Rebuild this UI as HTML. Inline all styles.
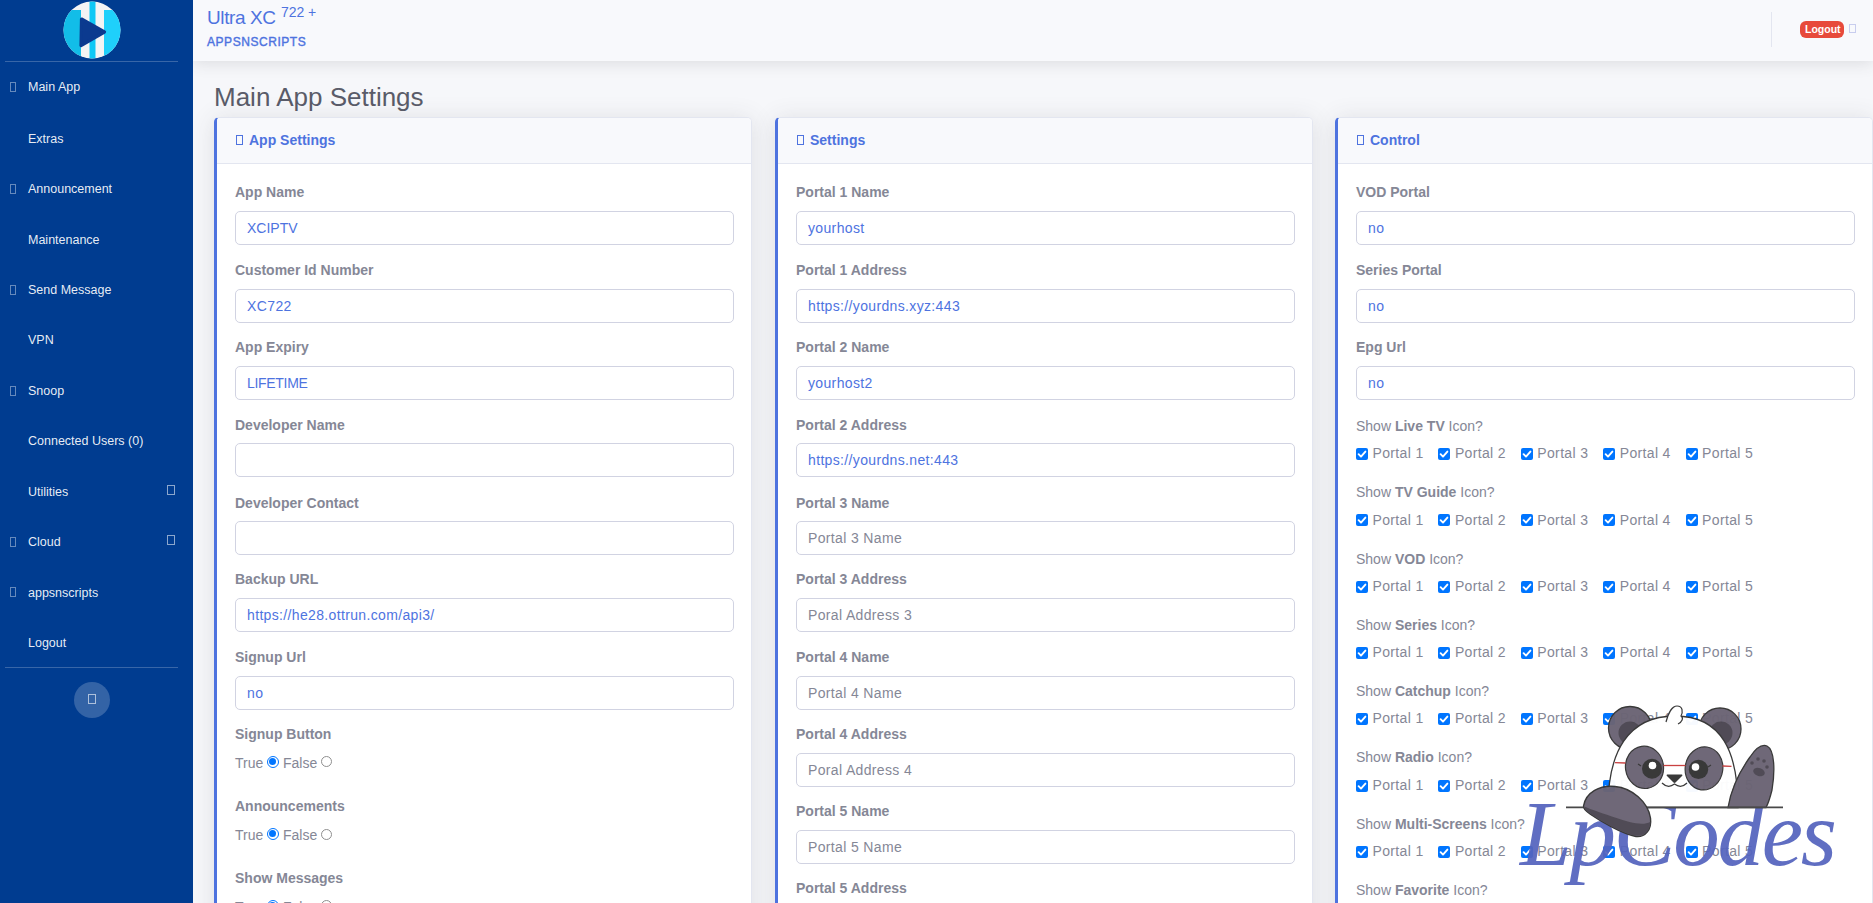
<!DOCTYPE html><html><head><meta charset="utf-8"><title>Main App Settings</title><style>
*{box-sizing:border-box;margin:0;padding:0}
html,body{width:1873px;height:903px;overflow:hidden}
body{font-family:"Liberation Sans",sans-serif;background:#f6f7fa;position:relative;color:#858796}
.t{position:absolute;white-space:nowrap;line-height:1}
#sb{position:absolute;left:0;top:0;width:193px;height:903px;background:#003c90;z-index:3}
.hr{position:absolute;left:5px;width:173px;height:1px;background:rgba(255,255,255,.22)}
.si{position:absolute;left:28px;font-size:12.5px;color:rgba(255,255,255,.92);white-space:nowrap;line-height:1}
.ic{position:absolute;left:10px;width:6px;height:10px;border:1px solid rgba(255,255,255,.4)}
.ar{position:absolute;left:167px;width:8px;height:10px;border:1px solid rgba(255,255,255,.55)}
#top{position:absolute;left:193px;top:0;width:1680px;height:61px;background:#f8f9fc;box-shadow:0 3px 14px rgba(58,59,69,.13);z-index:2}
.card{position:absolute;top:117px;height:820px;background:#fff;border-radius:5px;border:1px solid #e3e6f0;border-left:3px solid #4e73df;box-shadow:0 2px 24px rgba(58,59,69,.13);overflow:hidden}
.card .bl{position:absolute;left:0;top:0;bottom:0;width:3px;background:#4e73df;border-radius:5px 0 0 5px}
.card .hd{position:absolute;left:0;top:0;right:0;height:46px;background:#f8f9fc;border-bottom:1px solid #e3e6f0}
.ch{position:absolute;font-size:14px;font-weight:bold;color:#4e73df;white-space:nowrap;line-height:1}
.ch i{display:inline-block;width:7px;height:10px;border:1px solid #4e73df;margin-right:6px;vertical-align:0px}
.lbl{position:absolute;font-size:14px;font-weight:bold;color:#858796;white-space:nowrap;line-height:1}
.inp{position:absolute;height:34px;border:1px solid #d1d3e2;border-radius:5px;background:#fff}
.iv{position:absolute;font-size:14px;line-height:1;color:#4e73df;white-space:nowrap;letter-spacing:.35px}
.ph{color:#858796}
.rt{position:absolute;font-size:14px;line-height:1;color:#858796;white-space:nowrap}
.cb{position:absolute;width:12px;height:12px;background:#0075ff;border-radius:2px}
.cb svg{position:absolute;left:0;top:0}
.rad{position:absolute;width:12px;height:12px;border-radius:50%}
.ron{border:1.2px solid #0075ff;background:#fff}
.ron:after{content:"";position:absolute;left:1.3px;top:1.3px;width:7px;height:7px;border-radius:50%;background:#0075ff}
.roff{border:1px solid #8f8f8f;background:#fff;width:11.2px;height:11.2px}
</style></head><body>
<div id="sb">
<svg style="position:absolute;left:63px;top:0.5px" width="58" height="58" viewBox="0 0 58 58">
<defs><clipPath id="cc"><circle cx="29" cy="29" r="28.5"/></clipPath></defs>
<g clip-path="url(#cc)">
<rect x="0" y="0" width="58" height="58" fill="#f4f4f4"/>
<rect x="0" y="9" width="18" height="50" fill="#12bde8"/>
<rect x="26.5" y="0" width="6" height="58" fill="#0fc8f5"/>
<rect x="41" y="9" width="17" height="50" fill="#1fd0fb"/>
</g>
<path d="M18.5 18 L41.5 31 L18 44.5 Z" fill="#0b3a8f" stroke="#0b3a8f" stroke-width="3.2" stroke-linejoin="round"/>
</svg>
<div class="hr" style="top:61px"></div>
<div class="si" style="left:28px;top:81.22px;font-size:12.5px;">Main App</div>
<div class="ic" style="top:81.9px"></div>
<div class="si" style="left:28px;top:132.52px;font-size:12.5px;">Extras</div>
<div class="si" style="left:28px;top:183.02px;font-size:12.5px;">Announcement</div>
<div class="ic" style="top:183.7px"></div>
<div class="si" style="left:28px;top:233.82px;font-size:12.5px;">Maintenance</div>
<div class="si" style="left:28px;top:284.02px;font-size:12.5px;">Send Message</div>
<div class="ic" style="top:284.7px"></div>
<div class="si" style="left:28px;top:334.22px;font-size:12.5px;">VPN</div>
<div class="si" style="left:28px;top:385.02px;font-size:12.5px;">Snoop</div>
<div class="ic" style="top:385.7px"></div>
<div class="si" style="left:28px;top:435.32px;font-size:12.5px;">Connected Users (0)</div>
<div class="si" style="left:28px;top:486.02px;font-size:12.5px;">Utilities</div>
<div class="ar" style="top:485.0px"></div>
<div class="si" style="left:28px;top:536.02px;font-size:12.5px;">Cloud</div>
<div class="ic" style="top:536.7px"></div>
<div class="ar" style="top:535.0px"></div>
<div class="si" style="left:28px;top:586.52px;font-size:12.5px;">appsnscripts</div>
<div class="ic" style="top:587.2px"></div>
<div class="si" style="left:28px;top:637.02px;font-size:12.5px;">Logout</div>
<div class="hr" style="top:667px"></div>
<div style="position:absolute;left:74px;top:682px;width:36px;height:36px;border-radius:50%;background:rgba(255,255,255,.2)"><div style="position:absolute;left:14px;top:12px;width:8px;height:10px;border:1px solid rgba(255,255,255,.6)"></div></div>
</div>
<div id="top">
</div>
<div class="t" style="left:207px;top:7.82px;font-size:19px;color:#4e73df;z-index:4"><span style="letter-spacing:-.4px">Ultra XC</span> <sup style="font-size:14px;vertical-align:0;position:relative;top:-6.5px">722 +</sup></div>
<div class="t" style="left:207px;top:36.04px;font-size:12px;color:#4e73df;-webkit-text-stroke:.4px #4e73df;letter-spacing:.55px;z-index:4">APPSNSCRIPTS</div>
<div style="position:absolute;left:1771px;top:12px;width:1px;height:35px;background:#e3e6f0;z-index:4"></div>
<div style="position:absolute;left:1800px;top:21px;width:44px;height:17px;border-radius:6px;background:#e74a3b;z-index:4"></div>
<div class="t" style="left:1805px;top:24.41px;font-size:10.5px;color:#fff;font-weight:bold;z-index:5">Logout</div>
<div style="position:absolute;left:1849px;top:24px;width:7px;height:9px;border:1px solid #c8cdee;z-index:5"></div>
<div class="t" style="left:214px;top:83.79px;font-size:26px;color:#5a5c69">Main App Settings</div>
<div class="card" style="left:214px;width:538px"><div class="hd"></div></div>
<div class="ch" style="left:236px;top:132.65px;font-size:14px;"><i></i>App Settings</div>
<div class="card" style="left:775px;width:538px"><div class="hd"></div></div>
<div class="ch" style="left:797px;top:132.65px;font-size:14px;"><i></i>Settings</div>
<div class="card" style="left:1335px;width:538px"><div class="hd"></div></div>
<div class="ch" style="left:1357px;top:132.65px;font-size:14px;"><i></i>Control</div>
<div class="lbl" style="left:235px;top:185.35px;font-size:14px;">App Name</div>
<div class="inp" style="left:235px;top:211.0px;width:499px"></div>
<div class="iv" style="left:247px;top:221.15px;font-size:14px;letter-spacing:0px">XCIPTV</div>
<div class="lbl" style="left:235px;top:263.35px;font-size:14px;">Customer Id Number</div>
<div class="inp" style="left:235px;top:289.0px;width:499px"></div>
<div class="iv" style="left:247px;top:299.15px;font-size:14px;letter-spacing:0.4px">XC722</div>
<div class="lbl" style="left:235px;top:340.35px;font-size:14px;">App Expiry</div>
<div class="inp" style="left:235px;top:366.0px;width:499px"></div>
<div class="iv" style="left:247px;top:376.15px;font-size:14px;letter-spacing:-0.3px">LIFETIME</div>
<div class="lbl" style="left:235px;top:418.35px;font-size:14px;">Developer Name</div>
<div class="inp" style="left:235px;top:443.0px;width:499px"></div>
<div class="iv" style="left:247px;top:453.15px;font-size:14px;letter-spacing:0.35px"></div>
<div class="lbl" style="left:235px;top:495.95px;font-size:14px;">Developer Contact</div>
<div class="inp" style="left:235px;top:521.0px;width:499px"></div>
<div class="iv" style="left:247px;top:531.15px;font-size:14px;letter-spacing:0.35px"></div>
<div class="lbl" style="left:235px;top:572.35px;font-size:14px;">Backup URL</div>
<div class="inp" style="left:235px;top:598.0px;width:499px"></div>
<div class="iv" style="left:247px;top:608.15px;font-size:14px;letter-spacing:0.35px">https://he28.ottrun.com/api3/</div>
<div class="lbl" style="left:235px;top:650.35px;font-size:14px;">Signup Url</div>
<div class="inp" style="left:235px;top:676.0px;width:499px"></div>
<div class="iv" style="left:247px;top:686.15px;font-size:14px;letter-spacing:0.35px">no</div>
<div class="lbl" style="left:235px;top:726.75px;font-size:14px;">Signup Button</div>
<div class="rt" style="left:235px;top:755.95px;font-size:14px;">True</div>
<div class="rad ron" style="left:267px;top:755.8px"></div>
<div class="rt" style="left:283px;top:755.95px;font-size:14px;">False</div>
<div class="rad roff" style="left:321px;top:756.2px"></div>
<div class="lbl" style="left:235px;top:799.05px;font-size:14px;">Announcements</div>
<div class="rt" style="left:235px;top:828.25px;font-size:14px;">True</div>
<div class="rad ron" style="left:267px;top:828.1px"></div>
<div class="rt" style="left:283px;top:828.25px;font-size:14px;">False</div>
<div class="rad roff" style="left:321px;top:828.5px"></div>
<div class="lbl" style="left:235px;top:870.95px;font-size:14px;">Show Messages</div>
<div class="rt" style="left:235px;top:900.15px;font-size:14px;">True</div>
<div class="rad ron" style="left:267px;top:900.0px"></div>
<div class="rt" style="left:283px;top:900.15px;font-size:14px;">False</div>
<div class="rad roff" style="left:321px;top:900.4px"></div>
<div class="lbl" style="left:796px;top:185.35px;font-size:14px;">Portal 1 Name</div>
<div class="inp" style="left:796px;top:211.0px;width:499px"></div>
<div class="iv" style="left:808px;top:221.15px;font-size:14px;letter-spacing:0.35px">yourhost</div>
<div class="lbl" style="left:796px;top:263.35px;font-size:14px;">Portal 1 Address</div>
<div class="inp" style="left:796px;top:289.0px;width:499px"></div>
<div class="iv" style="left:808px;top:299.15px;font-size:14px;letter-spacing:0.35px">https://yourdns.xyz:443</div>
<div class="lbl" style="left:796px;top:340.35px;font-size:14px;">Portal 2 Name</div>
<div class="inp" style="left:796px;top:366.0px;width:499px"></div>
<div class="iv" style="left:808px;top:376.15px;font-size:14px;letter-spacing:0.35px">yourhost2</div>
<div class="lbl" style="left:796px;top:418.35px;font-size:14px;">Portal 2 Address</div>
<div class="inp" style="left:796px;top:443.0px;width:499px"></div>
<div class="iv" style="left:808px;top:453.15px;font-size:14px;letter-spacing:0.35px">https://yourdns.net:443</div>
<div class="lbl" style="left:796px;top:495.95px;font-size:14px;">Portal 3 Name</div>
<div class="inp" style="left:796px;top:521.0px;width:499px"></div>
<div class="iv ph" style="left:808px;top:531.15px;font-size:14px;letter-spacing:0.35px">Portal 3 Name</div>
<div class="lbl" style="left:796px;top:572.35px;font-size:14px;">Portal 3 Address</div>
<div class="inp" style="left:796px;top:598.0px;width:499px"></div>
<div class="iv ph" style="left:808px;top:608.15px;font-size:14px;letter-spacing:0.35px">Poral Address 3</div>
<div class="lbl" style="left:796px;top:650.35px;font-size:14px;">Portal 4 Name</div>
<div class="inp" style="left:796px;top:676.0px;width:499px"></div>
<div class="iv ph" style="left:808px;top:686.15px;font-size:14px;letter-spacing:0.35px">Portal 4 Name</div>
<div class="lbl" style="left:796px;top:727.35px;font-size:14px;">Portal 4 Address</div>
<div class="inp" style="left:796px;top:753.0px;width:499px"></div>
<div class="iv ph" style="left:808px;top:763.15px;font-size:14px;letter-spacing:0.35px">Poral Address 4</div>
<div class="lbl" style="left:796px;top:804.35px;font-size:14px;">Portal 5 Name</div>
<div class="inp" style="left:796px;top:830.0px;width:499px"></div>
<div class="iv ph" style="left:808px;top:840.15px;font-size:14px;letter-spacing:0.35px">Portal 5 Name</div>
<div class="lbl" style="left:796px;top:881.35px;font-size:14px;">Portal 5 Address</div>
<div class="inp" style="left:796px;top:907.0px;width:499px"></div>
<div class="iv" style="left:808px;top:917.15px;font-size:14px;letter-spacing:0.35px"></div>
<div class="lbl" style="left:1356px;top:185.35px;font-size:14px;">VOD Portal</div>
<div class="inp" style="left:1356px;top:211.0px;width:499px"></div>
<div class="iv" style="left:1368px;top:221.15px;font-size:14px;letter-spacing:0.35px">no</div>
<div class="lbl" style="left:1356px;top:263.35px;font-size:14px;">Series Portal</div>
<div class="inp" style="left:1356px;top:289.0px;width:499px"></div>
<div class="iv" style="left:1368px;top:299.15px;font-size:14px;letter-spacing:0.35px">no</div>
<div class="lbl" style="left:1356px;top:340.35px;font-size:14px;">Epg Url</div>
<div class="inp" style="left:1356px;top:366.0px;width:499px"></div>
<div class="iv" style="left:1368px;top:376.15px;font-size:14px;letter-spacing:0.35px">no</div>
<div class="rt" style="left:1356px;top:418.95px;font-size:14px;">Show <b>Live TV</b> Icon?</div>
<div class="cb" style="left:1356.0px;top:448.1px"><svg width="12" height="12" viewBox="0 0 12 12"><path d="M2.6 6.2 L5 8.6 L9.4 3.6" fill="none" stroke="#fff" stroke-width="1.9" stroke-linecap="round" stroke-linejoin="round"/></svg></div>
<div class="rt" style="left:1372.5px;top:446.25px;font-size:14px;letter-spacing:.35px">Portal 1</div>
<div class="cb" style="left:1438.4px;top:448.1px"><svg width="12" height="12" viewBox="0 0 12 12"><path d="M2.6 6.2 L5 8.6 L9.4 3.6" fill="none" stroke="#fff" stroke-width="1.9" stroke-linecap="round" stroke-linejoin="round"/></svg></div>
<div class="rt" style="left:1454.9px;top:446.25px;font-size:14px;letter-spacing:.35px">Portal 2</div>
<div class="cb" style="left:1520.8px;top:448.1px"><svg width="12" height="12" viewBox="0 0 12 12"><path d="M2.6 6.2 L5 8.6 L9.4 3.6" fill="none" stroke="#fff" stroke-width="1.9" stroke-linecap="round" stroke-linejoin="round"/></svg></div>
<div class="rt" style="left:1537.3px;top:446.25px;font-size:14px;letter-spacing:.35px">Portal 3</div>
<div class="cb" style="left:1603.2px;top:448.1px"><svg width="12" height="12" viewBox="0 0 12 12"><path d="M2.6 6.2 L5 8.6 L9.4 3.6" fill="none" stroke="#fff" stroke-width="1.9" stroke-linecap="round" stroke-linejoin="round"/></svg></div>
<div class="rt" style="left:1619.7px;top:446.25px;font-size:14px;letter-spacing:.35px">Portal 4</div>
<div class="cb" style="left:1685.6px;top:448.1px"><svg width="12" height="12" viewBox="0 0 12 12"><path d="M2.6 6.2 L5 8.6 L9.4 3.6" fill="none" stroke="#fff" stroke-width="1.9" stroke-linecap="round" stroke-linejoin="round"/></svg></div>
<div class="rt" style="left:1702.1px;top:446.25px;font-size:14px;letter-spacing:.35px">Portal 5</div>
<div class="rt" style="left:1356px;top:485.25px;font-size:14px;">Show <b>TV Guide</b> Icon?</div>
<div class="cb" style="left:1356.0px;top:514.4px"><svg width="12" height="12" viewBox="0 0 12 12"><path d="M2.6 6.2 L5 8.6 L9.4 3.6" fill="none" stroke="#fff" stroke-width="1.9" stroke-linecap="round" stroke-linejoin="round"/></svg></div>
<div class="rt" style="left:1372.5px;top:512.55px;font-size:14px;letter-spacing:.35px">Portal 1</div>
<div class="cb" style="left:1438.4px;top:514.4px"><svg width="12" height="12" viewBox="0 0 12 12"><path d="M2.6 6.2 L5 8.6 L9.4 3.6" fill="none" stroke="#fff" stroke-width="1.9" stroke-linecap="round" stroke-linejoin="round"/></svg></div>
<div class="rt" style="left:1454.9px;top:512.55px;font-size:14px;letter-spacing:.35px">Portal 2</div>
<div class="cb" style="left:1520.8px;top:514.4px"><svg width="12" height="12" viewBox="0 0 12 12"><path d="M2.6 6.2 L5 8.6 L9.4 3.6" fill="none" stroke="#fff" stroke-width="1.9" stroke-linecap="round" stroke-linejoin="round"/></svg></div>
<div class="rt" style="left:1537.3px;top:512.55px;font-size:14px;letter-spacing:.35px">Portal 3</div>
<div class="cb" style="left:1603.2px;top:514.4px"><svg width="12" height="12" viewBox="0 0 12 12"><path d="M2.6 6.2 L5 8.6 L9.4 3.6" fill="none" stroke="#fff" stroke-width="1.9" stroke-linecap="round" stroke-linejoin="round"/></svg></div>
<div class="rt" style="left:1619.7px;top:512.55px;font-size:14px;letter-spacing:.35px">Portal 4</div>
<div class="cb" style="left:1685.6px;top:514.4px"><svg width="12" height="12" viewBox="0 0 12 12"><path d="M2.6 6.2 L5 8.6 L9.4 3.6" fill="none" stroke="#fff" stroke-width="1.9" stroke-linecap="round" stroke-linejoin="round"/></svg></div>
<div class="rt" style="left:1702.1px;top:512.55px;font-size:14px;letter-spacing:.35px">Portal 5</div>
<div class="rt" style="left:1356px;top:551.55px;font-size:14px;">Show <b>VOD</b> Icon?</div>
<div class="cb" style="left:1356.0px;top:580.7px"><svg width="12" height="12" viewBox="0 0 12 12"><path d="M2.6 6.2 L5 8.6 L9.4 3.6" fill="none" stroke="#fff" stroke-width="1.9" stroke-linecap="round" stroke-linejoin="round"/></svg></div>
<div class="rt" style="left:1372.5px;top:578.85px;font-size:14px;letter-spacing:.35px">Portal 1</div>
<div class="cb" style="left:1438.4px;top:580.7px"><svg width="12" height="12" viewBox="0 0 12 12"><path d="M2.6 6.2 L5 8.6 L9.4 3.6" fill="none" stroke="#fff" stroke-width="1.9" stroke-linecap="round" stroke-linejoin="round"/></svg></div>
<div class="rt" style="left:1454.9px;top:578.85px;font-size:14px;letter-spacing:.35px">Portal 2</div>
<div class="cb" style="left:1520.8px;top:580.7px"><svg width="12" height="12" viewBox="0 0 12 12"><path d="M2.6 6.2 L5 8.6 L9.4 3.6" fill="none" stroke="#fff" stroke-width="1.9" stroke-linecap="round" stroke-linejoin="round"/></svg></div>
<div class="rt" style="left:1537.3px;top:578.85px;font-size:14px;letter-spacing:.35px">Portal 3</div>
<div class="cb" style="left:1603.2px;top:580.7px"><svg width="12" height="12" viewBox="0 0 12 12"><path d="M2.6 6.2 L5 8.6 L9.4 3.6" fill="none" stroke="#fff" stroke-width="1.9" stroke-linecap="round" stroke-linejoin="round"/></svg></div>
<div class="rt" style="left:1619.7px;top:578.85px;font-size:14px;letter-spacing:.35px">Portal 4</div>
<div class="cb" style="left:1685.6px;top:580.7px"><svg width="12" height="12" viewBox="0 0 12 12"><path d="M2.6 6.2 L5 8.6 L9.4 3.6" fill="none" stroke="#fff" stroke-width="1.9" stroke-linecap="round" stroke-linejoin="round"/></svg></div>
<div class="rt" style="left:1702.1px;top:578.85px;font-size:14px;letter-spacing:.35px">Portal 5</div>
<div class="rt" style="left:1356px;top:617.85px;font-size:14px;">Show <b>Series</b> Icon?</div>
<div class="cb" style="left:1356.0px;top:647.0px"><svg width="12" height="12" viewBox="0 0 12 12"><path d="M2.6 6.2 L5 8.6 L9.4 3.6" fill="none" stroke="#fff" stroke-width="1.9" stroke-linecap="round" stroke-linejoin="round"/></svg></div>
<div class="rt" style="left:1372.5px;top:645.15px;font-size:14px;letter-spacing:.35px">Portal 1</div>
<div class="cb" style="left:1438.4px;top:647.0px"><svg width="12" height="12" viewBox="0 0 12 12"><path d="M2.6 6.2 L5 8.6 L9.4 3.6" fill="none" stroke="#fff" stroke-width="1.9" stroke-linecap="round" stroke-linejoin="round"/></svg></div>
<div class="rt" style="left:1454.9px;top:645.15px;font-size:14px;letter-spacing:.35px">Portal 2</div>
<div class="cb" style="left:1520.8px;top:647.0px"><svg width="12" height="12" viewBox="0 0 12 12"><path d="M2.6 6.2 L5 8.6 L9.4 3.6" fill="none" stroke="#fff" stroke-width="1.9" stroke-linecap="round" stroke-linejoin="round"/></svg></div>
<div class="rt" style="left:1537.3px;top:645.15px;font-size:14px;letter-spacing:.35px">Portal 3</div>
<div class="cb" style="left:1603.2px;top:647.0px"><svg width="12" height="12" viewBox="0 0 12 12"><path d="M2.6 6.2 L5 8.6 L9.4 3.6" fill="none" stroke="#fff" stroke-width="1.9" stroke-linecap="round" stroke-linejoin="round"/></svg></div>
<div class="rt" style="left:1619.7px;top:645.15px;font-size:14px;letter-spacing:.35px">Portal 4</div>
<div class="cb" style="left:1685.6px;top:647.0px"><svg width="12" height="12" viewBox="0 0 12 12"><path d="M2.6 6.2 L5 8.6 L9.4 3.6" fill="none" stroke="#fff" stroke-width="1.9" stroke-linecap="round" stroke-linejoin="round"/></svg></div>
<div class="rt" style="left:1702.1px;top:645.15px;font-size:14px;letter-spacing:.35px">Portal 5</div>
<div class="rt" style="left:1356px;top:684.15px;font-size:14px;">Show <b>Catchup</b> Icon?</div>
<div class="cb" style="left:1356.0px;top:713.3px"><svg width="12" height="12" viewBox="0 0 12 12"><path d="M2.6 6.2 L5 8.6 L9.4 3.6" fill="none" stroke="#fff" stroke-width="1.9" stroke-linecap="round" stroke-linejoin="round"/></svg></div>
<div class="rt" style="left:1372.5px;top:711.45px;font-size:14px;letter-spacing:.35px">Portal 1</div>
<div class="cb" style="left:1438.4px;top:713.3px"><svg width="12" height="12" viewBox="0 0 12 12"><path d="M2.6 6.2 L5 8.6 L9.4 3.6" fill="none" stroke="#fff" stroke-width="1.9" stroke-linecap="round" stroke-linejoin="round"/></svg></div>
<div class="rt" style="left:1454.9px;top:711.45px;font-size:14px;letter-spacing:.35px">Portal 2</div>
<div class="cb" style="left:1520.8px;top:713.3px"><svg width="12" height="12" viewBox="0 0 12 12"><path d="M2.6 6.2 L5 8.6 L9.4 3.6" fill="none" stroke="#fff" stroke-width="1.9" stroke-linecap="round" stroke-linejoin="round"/></svg></div>
<div class="rt" style="left:1537.3px;top:711.45px;font-size:14px;letter-spacing:.35px">Portal 3</div>
<div class="cb" style="left:1603.2px;top:713.3px"><svg width="12" height="12" viewBox="0 0 12 12"><path d="M2.6 6.2 L5 8.6 L9.4 3.6" fill="none" stroke="#fff" stroke-width="1.9" stroke-linecap="round" stroke-linejoin="round"/></svg></div>
<div class="rt" style="left:1619.7px;top:711.45px;font-size:14px;letter-spacing:.35px">Portal 4</div>
<div class="cb" style="left:1685.6px;top:713.3px"><svg width="12" height="12" viewBox="0 0 12 12"><path d="M2.6 6.2 L5 8.6 L9.4 3.6" fill="none" stroke="#fff" stroke-width="1.9" stroke-linecap="round" stroke-linejoin="round"/></svg></div>
<div class="rt" style="left:1702.1px;top:711.45px;font-size:14px;letter-spacing:.35px">Portal 5</div>
<div class="rt" style="left:1356px;top:750.45px;font-size:14px;">Show <b>Radio</b> Icon?</div>
<div class="cb" style="left:1356.0px;top:779.6px"><svg width="12" height="12" viewBox="0 0 12 12"><path d="M2.6 6.2 L5 8.6 L9.4 3.6" fill="none" stroke="#fff" stroke-width="1.9" stroke-linecap="round" stroke-linejoin="round"/></svg></div>
<div class="rt" style="left:1372.5px;top:777.75px;font-size:14px;letter-spacing:.35px">Portal 1</div>
<div class="cb" style="left:1438.4px;top:779.6px"><svg width="12" height="12" viewBox="0 0 12 12"><path d="M2.6 6.2 L5 8.6 L9.4 3.6" fill="none" stroke="#fff" stroke-width="1.9" stroke-linecap="round" stroke-linejoin="round"/></svg></div>
<div class="rt" style="left:1454.9px;top:777.75px;font-size:14px;letter-spacing:.35px">Portal 2</div>
<div class="cb" style="left:1520.8px;top:779.6px"><svg width="12" height="12" viewBox="0 0 12 12"><path d="M2.6 6.2 L5 8.6 L9.4 3.6" fill="none" stroke="#fff" stroke-width="1.9" stroke-linecap="round" stroke-linejoin="round"/></svg></div>
<div class="rt" style="left:1537.3px;top:777.75px;font-size:14px;letter-spacing:.35px">Portal 3</div>
<div class="cb" style="left:1603.2px;top:779.6px"><svg width="12" height="12" viewBox="0 0 12 12"><path d="M2.6 6.2 L5 8.6 L9.4 3.6" fill="none" stroke="#fff" stroke-width="1.9" stroke-linecap="round" stroke-linejoin="round"/></svg></div>
<div class="rt" style="left:1619.7px;top:777.75px;font-size:14px;letter-spacing:.35px">Portal 4</div>
<div class="cb" style="left:1685.6px;top:779.6px"><svg width="12" height="12" viewBox="0 0 12 12"><path d="M2.6 6.2 L5 8.6 L9.4 3.6" fill="none" stroke="#fff" stroke-width="1.9" stroke-linecap="round" stroke-linejoin="round"/></svg></div>
<div class="rt" style="left:1702.1px;top:777.75px;font-size:14px;letter-spacing:.35px">Portal 5</div>
<div class="rt" style="left:1356px;top:816.75px;font-size:14px;">Show <b>Multi-Screens</b> Icon?</div>
<div class="cb" style="left:1356.0px;top:845.9px"><svg width="12" height="12" viewBox="0 0 12 12"><path d="M2.6 6.2 L5 8.6 L9.4 3.6" fill="none" stroke="#fff" stroke-width="1.9" stroke-linecap="round" stroke-linejoin="round"/></svg></div>
<div class="rt" style="left:1372.5px;top:844.05px;font-size:14px;letter-spacing:.35px">Portal 1</div>
<div class="cb" style="left:1438.4px;top:845.9px"><svg width="12" height="12" viewBox="0 0 12 12"><path d="M2.6 6.2 L5 8.6 L9.4 3.6" fill="none" stroke="#fff" stroke-width="1.9" stroke-linecap="round" stroke-linejoin="round"/></svg></div>
<div class="rt" style="left:1454.9px;top:844.05px;font-size:14px;letter-spacing:.35px">Portal 2</div>
<div class="cb" style="left:1520.8px;top:845.9px"><svg width="12" height="12" viewBox="0 0 12 12"><path d="M2.6 6.2 L5 8.6 L9.4 3.6" fill="none" stroke="#fff" stroke-width="1.9" stroke-linecap="round" stroke-linejoin="round"/></svg></div>
<div class="rt" style="left:1537.3px;top:844.05px;font-size:14px;letter-spacing:.35px">Portal 3</div>
<div class="cb" style="left:1603.2px;top:845.9px"><svg width="12" height="12" viewBox="0 0 12 12"><path d="M2.6 6.2 L5 8.6 L9.4 3.6" fill="none" stroke="#fff" stroke-width="1.9" stroke-linecap="round" stroke-linejoin="round"/></svg></div>
<div class="rt" style="left:1619.7px;top:844.05px;font-size:14px;letter-spacing:.35px">Portal 4</div>
<div class="cb" style="left:1685.6px;top:845.9px"><svg width="12" height="12" viewBox="0 0 12 12"><path d="M2.6 6.2 L5 8.6 L9.4 3.6" fill="none" stroke="#fff" stroke-width="1.9" stroke-linecap="round" stroke-linejoin="round"/></svg></div>
<div class="rt" style="left:1702.1px;top:844.05px;font-size:14px;letter-spacing:.35px">Portal 5</div>
<div class="rt" style="left:1356px;top:883.05px;font-size:14px;">Show <b>Favorite</b> Icon?</div>
<svg style="position:absolute;left:1500px;top:695px;z-index:6" width="373" height="208" viewBox="1500 695 373 208">
<g opacity="0.97">
<text x="1520" y="865" font-family="Liberation Serif" font-style="italic" font-size="93" letter-spacing="-2.3" fill="#5464be" fill-opacity="0.96">LpCodes</text>
<circle cx="1630" cy="728" r="21.5" fill="#6b6474" stroke="#333" stroke-width="1.3"/>
<circle cx="1630" cy="733" r="11.5" fill="#4b4651"/>
<circle cx="1720" cy="729" r="21" fill="#6b6474" stroke="#333" stroke-width="1.3"/>
<circle cx="1721" cy="733" r="11.5" fill="#4b4651"/>
<path d="M1608 807.5 C1608 752 1628 716 1675 716 C1722 716 1738 752 1738 807.5 Z" fill="#fff" stroke="#333" stroke-width="1.3"/>
<path d="M1666 722 C1668 714 1672 706 1677 706 C1683 706 1683 712 1681 716 C1684 718 1682 722 1678 724" fill="#fff" stroke="#333" stroke-width="1.2"/>
<ellipse cx="1644.5" cy="767.3" rx="19" ry="21.2" fill="#6b6474" stroke="#333" stroke-width="1.2" transform="rotate(-8 1644.5 767.3)"/>
<ellipse cx="1704" cy="768.4" rx="18.8" ry="21.6" fill="#6b6474" stroke="#333" stroke-width="1.2" transform="rotate(8 1704 768.4)"/>
<line x1="1615" y1="762.6" x2="1625.5" y2="763" stroke="#c83c3c" stroke-width="1.3"/>
<line x1="1663.5" y1="765.5" x2="1685.5" y2="765.5" stroke="#c83c3c" stroke-width="1.3"/>
<line x1="1722.5" y1="766" x2="1731.5" y2="766.3" stroke="#c83c3c" stroke-width="1.3"/>
<circle cx="1652" cy="768.7" r="10" fill="#333"/>
<circle cx="1652.5" cy="765.5" r="3.8" fill="#fff"/>
<circle cx="1698.5" cy="769.4" r="9.7" fill="#333"/>
<circle cx="1695.5" cy="767" r="3.8" fill="#fff"/>
<path d="M1641 766 L1638 764 M1708 767 L1711 765" stroke="#333" stroke-width="1.2"/>
<path d="M1667 774.5 L1682 774.5 Q1683 775 1682 776 L1675.5 782.5 Q1674.5 783.3 1673.5 782.5 L1667 776 Q1666 775 1667 774.5 Z" fill="#333"/>
<path d="M1662 783 Q1668 789 1674.5 784 Q1681 789 1687 783" fill="none" stroke="#333" stroke-width="1.2"/>
<path d="M1728 807.5 C1731 790 1737 775 1750 757 C1756 748 1762 744 1767 746 C1775 750 1775 772 1772 790 C1770 798 1768 804 1766 807.5 Z" fill="#6b6474" stroke="#333" stroke-width="1.3"/>
<ellipse cx="1759" cy="772" rx="6" ry="4" fill="#4b4651" transform="rotate(20 1759 772)"/>
<circle cx="1752" cy="763" r="1.8" fill="#4b4651"/><circle cx="1758" cy="759" r="1.8" fill="#4b4651"/><circle cx="1764" cy="761" r="1.8" fill="#4b4651"/><circle cx="1767" cy="767" r="1.8" fill="#4b4651"/>
<line x1="1566" y1="807.3" x2="1783" y2="807.3" stroke="#444" stroke-width="1.7"/>
<path d="M1583.5 806 C1586 792 1600 785 1615 786.5 C1632 788 1648 802 1650.5 818 C1652 830 1645 837.5 1636 836.5 C1622 834 1600 821 1590 814 C1585 810.5 1583 808.5 1583.5 806 Z" fill="#6b6474" stroke="#333" stroke-width="1.4"/>
<path d="M1584.3 806.5 C1592 810 1605 814 1615 817.5 C1630 822.5 1642 826 1650.3 822 C1650.5 830 1645 836.5 1636 835.8 C1622 833.5 1600 820.5 1590.5 813.5 C1586 810.5 1584.3 808.5 1584.3 806.5 Z" fill="#4b4651"/>
</g>
</svg>
</body></html>
